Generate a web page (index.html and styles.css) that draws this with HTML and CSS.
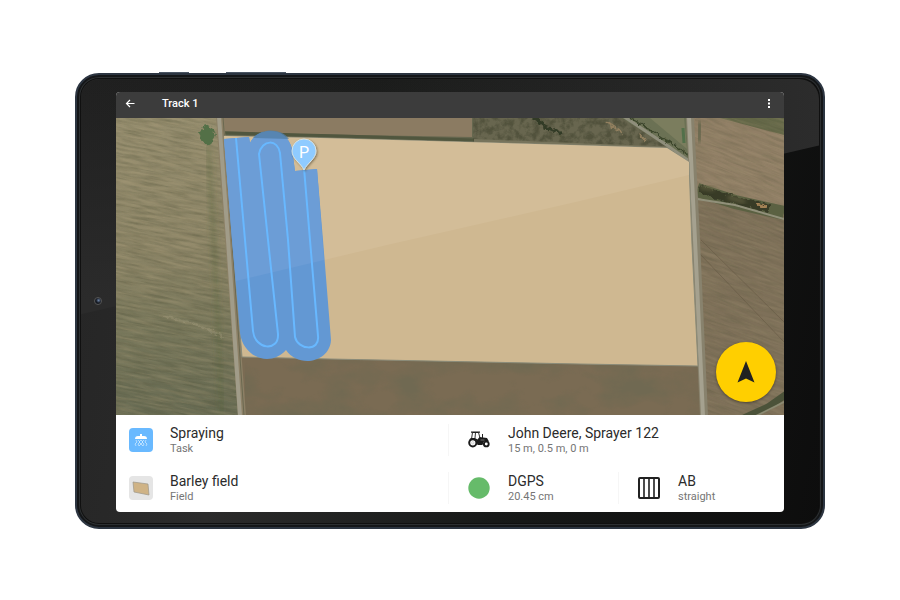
FILE: index.html
```html
<!DOCTYPE html>
<html lang="en">
<head>
<meta charset="utf-8">
<meta name="viewport" content="width=device-width, initial-scale=1">
<title>Track 1</title>
<link rel="stylesheet" href="styles.css">
</head>
<body>
<main class="tablet">
  <span class="side-key side-key-power"></span>
  <span class="side-key side-key-volume"></span>
  <span class="camera"></span>
  <div class="screen">
    <header class="app-bar">
      <button class="icon-button" type="button" aria-label="Back">
        <svg viewBox="0 0 12 12" width="12" height="12"><path d="M9.500 5.500H2M5 2L1.500 5.500L5 9" fill="none" stroke="#fff" stroke-width="1.200"/></svg>
      </button>
      <h1 class="app-title">Track 1</h1>
      <button class="icon-button" type="button" aria-label="More options">
        <svg viewBox="0 0 12 12" width="12" height="12" fill="#fff"><rect x="5" y="1" width="2" height="2"/><rect x="5" y="4.500" width="2" height="2"/><rect x="5" y="8" width="2" height="2"/></svg>
      </button>
    </header>

    <section class="map" aria-label="Field map">
      <svg class="map-canvas" viewBox="116 118 668 297" preserveAspectRatio="xMidYMid slice">
        <defs>
          <filter id="streaks" x="0" y="0" width="100%" height="100%" color-interpolation-filters="sRGB">
            <feTurbulence type="fractalNoise" baseFrequency="0.04 0.4" numOctaves="4" seed="7"/>
            <feColorMatrix values="0 0 0 0 0.34  0 0 0 0 0.34  0 0 0 0 0.24  1.8 0 0 0 -0.7"/>
          </filter>
          <filter id="glints" x="0" y="0" width="100%" height="100%" color-interpolation-filters="sRGB">
            <feTurbulence type="fractalNoise" baseFrequency="0.03 0.34" numOctaves="4" seed="21"/>
            <feColorMatrix values="0 0 0 0 0.7  0 0 0 0 0.64  0 0 0 0 0.5  1.8 0 0 0 -0.66"/>
          </filter>
          <filter id="patches" x="0" y="0" width="100%" height="100%" color-interpolation-filters="sRGB">
            <feTurbulence type="fractalNoise" baseFrequency="0.02 0.035" numOctaves="5" seed="3"/>
            <feColorMatrix values="0 0 0 0 0.42  0 0 0 0 0.41  0 0 0 0 0.32  3 0 0 0 -1.2"/>
          </filter>
          <filter id="scrub" x="0" y="0" width="100%" height="100%" color-interpolation-filters="sRGB">
            <feTurbulence type="fractalNoise" baseFrequency="0.15" numOctaves="4" seed="5"/>
            <feColorMatrix values="0 0 0 0 0.25  0 0 0 0 0.26  0 0 0 0 0.18  3 0 0 0 -1.2"/>
          </filter>
          <filter id="rough" x="-10%" y="-30%" width="120%" height="160%">
            <feTurbulence type="fractalNoise" baseFrequency="0.22" numOctaves="3" seed="4"/>
            <feDisplacementMap in="SourceGraphic" scale="6" xChannelSelector="R" yChannelSelector="G"/>
            <feGaussianBlur stdDeviation=".5"/>
          </filter>
          <filter id="soft"><feGaussianBlur stdDeviation="2"/></filter>
          <filter id="pin-shadow" x="-30%" y="-30%" width="170%" height="170%"><feDropShadow dx="1" dy="1" stdDeviation="1" flood-color="#3d3422" flood-opacity=".55"/></filter>
          <linearGradient id="west" x1="0" y1="0" x2="0" y2="1">
            <stop offset="0" stop-color="#958d6e"/><stop offset=".45" stop-color="#8b8466"/>
            <stop offset=".7" stop-color="#76765a"/><stop offset="1" stop-color="#666a52"/>
          </linearGradient>
          <clipPath id="west-clip"><path d="M116 118H219L228 240L239 415H116Z"/></clipPath>
          <clipPath id="east-clip"><path d="M692 118H784V415H706L698 240Z"/></clipPath>
          <clipPath id="north-clip"><path d="M473 118H692V166L667 150L473 144Z"/></clipPath>
        </defs>

        <rect x="116" y="118" width="668" height="297" fill="#776b52"/>

        <path d="M116 118H219L228 240L239 415H116Z" fill="url(#west)"/>
        <g clip-path="url(#west-clip)">
          <path d="M208 145L214 245L222 415" fill="none" stroke="#536040" stroke-opacity=".35" stroke-width="6" filter="url(#soft)"/>
          <rect x="60" y="60" width="260" height="400" filter="url(#streaks)" opacity=".5" transform="rotate(11 170 260)"/>
          <rect x="60" y="60" width="260" height="400" filter="url(#glints)" opacity=".4" transform="rotate(11 170 260)"/>
          <path d="M205 124L213 129L216 135L210 145L204 143L199 133Z" fill="#526f47" filter="url(#rough)"/>
          <path d="M163 316L190 322L222 336" fill="none" stroke="#aaa182" stroke-opacity=".35" stroke-width="2" filter="url(#rough)"/>
        </g>

        <path d="M222 118H560V150L223 140Z" fill="#66674f"/>
        <path d="M222 118H472V137L300 134L222 131Z" fill="#8b7b62"/>
        <path d="M223 133L340 136L474 140" fill="none" stroke="#50563e" stroke-width="3"/>

        <path d="M474 118H692V166L667 150L474 144Z" fill="#68664f"/>
        <g clip-path="url(#north-clip)">
          <rect x="470" y="118" width="225" height="50" filter="url(#scrub)" opacity=".55"/>
          <path d="M474 141L600 146L680 149" fill="none" stroke="#77745c" stroke-width="4"/>
          <path d="M534 117L546 127L562 134" fill="none" stroke="#333b26" stroke-width="3" filter="url(#rough)"/>
          <path d="M607 122L622 133M640 135L646 141" fill="none" stroke="#93805f" stroke-width="2" filter="url(#rough)"/>
          <path d="M622 118H692V166L675 152Z" fill="#6b7154"/>
          <path d="M650 118H684L687 149Z" fill="#7b7d5e"/>
          <path d="M623 116L668 146L692 163" fill="none" stroke="#8f8e7b" stroke-width="3"/>
          <path d="M630 117L658 135L692 157" fill="none" stroke="#3b452b" stroke-width="2" filter="url(#rough)"/>
          <path d="M683 128L684 143" stroke="#52704a" stroke-width="3"/>
        </g>

        <path d="M692 118H784V260H698Z" fill="#917f66"/>
        <path d="M720 118H784V135Z" fill="#646848"/>
        <path d="M696 198L784 216V415H706Z" fill="#7e7059"/>
        <g clip-path="url(#east-clip)">
          <rect x="650" y="60" width="200" height="400" filter="url(#streaks)" opacity=".35" transform="rotate(22 740 250)"/>
          <rect x="650" y="60" width="200" height="400" filter="url(#glints)" opacity=".25" transform="rotate(17 740 250)"/>
          <path d="M697 190L735 202L784 213" fill="none" stroke="#5b6142" stroke-width="14"/>
          <path d="M699 189L730 199L770 209" fill="none" stroke="#373b27" stroke-width="8" filter="url(#rough)"/>
          <path d="M700 187L714 189M728 197L745 202" fill="none" stroke="#666444" stroke-width="3" filter="url(#soft)"/>
          <path d="M697 199L735 205L784 219" fill="none" stroke="#91907a" stroke-width="2"/>
          <path d="M757 204L766 207" stroke="#a38154" stroke-width="3" filter="url(#rough)"/>
          <path d="M700 122L699 142" stroke="#61634a" stroke-width="5" filter="url(#soft)"/>
          <path d="M700 254L784 342M701 240L784 322" fill="none" stroke="#655744" stroke-opacity=".55" stroke-width="1"/>
          <path d="M744 418L768 407L788 393" fill="none" stroke="#4b5239" stroke-width="7"/>
          <path d="M752 418L788 400" fill="none" stroke="#8b8a72" stroke-width="2"/>
        </g>

        <path d="M241 357L699 366L704 415H245Z" fill="#7a6b53"/>
        <rect x="245" y="359" width="457" height="56" filter="url(#patches)" opacity=".6"/>

        <path d="M220 117L229 240L242 416" fill="none" stroke="#8c8066" stroke-width="8"/>
        <path d="M219 117L228 240L240 416" fill="none" stroke="#a19c89" stroke-width="4"/>
        <path d="M223 117L232 240L244 416" fill="none" stroke="#6b6850" stroke-width="1"/>
        <path d="M690 117L696 240L704 416" fill="none" stroke="#88826d" stroke-width="8"/>
        <path d="M689 117L695 240L703 416" fill="none" stroke="#a5a18f" stroke-width="4"/>

        <path d="M224 136L320 138L570 145L667 148L689 162L692 245L698 366L580 364L330 359L242 357Z" fill="#cfb891" stroke="#8a8b79" stroke-width="1"/>
        <path d="M224 136L320 138L570 145L667 148L689 162V175L580 201L387 245L236 281Z" fill="#d3bd98"/>

        <path d="M224 139L249 137L250 143C257 127 287 126 292 149L295 171L317 169L323 240L331 340C330 362 299 369 286 350C270 368 243 357 240 333L232 240Z" fill="#6398d3"/>
        <path d="M224 139L249 137L250 143C257 127 287 126 292 149L295 171L317 169L324 260L236 281L232 240Z" fill="#6c9dd6"/>
        <path d="M253 138C262 128 281 128 289 139Z" fill="#527fa9" opacity=".8"/>
        <path d="M236 138L245 240L253 331C255 350 279 352 278 334L268 240L259 154C262 139 278 139 280 153L288 240L295 337C298 350 320 352 318 336L310 240L304 168" fill="none" stroke="#68b8ff" stroke-width="2" stroke-linejoin="round"/>

        <g filter="url(#pin-shadow)">
          <path d="M304 170C301 163 292 159 292 151A12 12 0 0 1 316 151C316 159 307 163 304 170Z" fill="#8fcbff" stroke="#d5e3e5" stroke-width="1"/>
        </g>
        <text x="304" y="158" text-anchor="middle" class="pin-label">P</text>
      </svg>
      <button class="locate" type="button" aria-label="Follow position">
        <svg viewBox="0 0 18 22" width="18" height="22"><path d="M9 0L17.500 21.500L9 17.500L.5 21.500Z" fill="#212121"/></svg>
      </button>
    </section>

    <section class="details" aria-label="Track details">
      <article class="item item-lead">
        <svg class="item-icon" viewBox="0 0 24 24">
          <rect x="0" y="0" width="24" height="24" rx="4" fill="#69b9ff"/>
          <path d="M11 6h2v2h-2zM6 11c0-2 1-3 3-3h6c2 0 3 1 3 3z" fill="#fff"/>
          <path d="M7 12l1 2-2 2 1 2M9 12l2 2-2 2 1 2M12 12l-2 2 2 2-2 2M12 12l2 2-2 2 2 2M15 12l-2 2 2 2-1 2M17 12l-1 2 2 2-1 2" fill="none" stroke="#d9eeff" stroke-width=".7"/>
        </svg>
        <div class="item-text"><h2>Spraying</h2><p>Task</p></div>
      </article>
      <article class="item item-wide">
        <svg class="item-icon" viewBox="0 0 24 24">
          <path d="M4.500 11L5.500 4.500H11.500L13 10M8.500 4.500L8 10" fill="none" stroke="#333" stroke-width="1"/>
          <path d="M4 3.500h9v1.300H4zM2 11.500l2-1.500h4l2.500 1.500 2-2.500 7.500 1 2 3.500-3.500-.5-2 1-1 3h-5L9 12z" fill="#1b1b1b"/>
          <path d="M15 10V6h1v4z" fill="#222"/>
          <path d="M13.500 12h4" stroke="#aaa" stroke-width=".6"/>
          <circle cx="5.800" cy="14.800" r="3.600" fill="#fff" stroke="#1b1b1b" stroke-width="2"/>
          <circle cx="5.800" cy="14.800" r="1.200" fill="none" stroke="#bbb" stroke-width=".6"/>
          <circle cx="19.300" cy="16" r="2.400" fill="#fff" stroke="#1b1b1b" stroke-width="1.900"/>
        </svg>
        <div class="item-text"><h2>John Deere, Sprayer 122</h2><p>15 m, 0.5 m, 0 m</p></div>
      </article>
      <article class="item item-lead">
        <svg class="item-icon" viewBox="0 0 24 24">
          <rect x="0" y="0" width="24" height="24" rx="4" fill="#e5e5e5"/>
          <path d="M4 6l15 2 1 11-15-3z" fill="#cfb386" stroke="#9c9689" stroke-width=".7"/>
        </svg>
        <div class="item-text"><h2>Barley field</h2><p>Field</p></div>
      </article>
      <article class="item">
        <svg class="item-icon" viewBox="0 0 24 24"><circle cx="12" cy="12" r="10.700" fill="#66bb6a"/></svg>
        <div class="item-text"><h2>DGPS</h2><p>20.45 cm</p></div>
      </article>
      <article class="item">
        <svg class="item-icon" viewBox="0 0 24 24"><rect x="2" y="2" width="20" height="20" rx="1" fill="none" stroke="#212121" stroke-width="2"/><path d="M7 2v20M12 2v20M17 2v20" stroke="#212121" stroke-width="1.600"/></svg>
        <div class="item-text"><h2>AB</h2><p>straight</p></div>
      </article>
    </section>
  </div>
</main>
</body>
</html>
```

FILE: styles.css
```css
* { box-sizing: border-box; }

body {
  margin: 0;
  min-height: 100vh;
  padding: 2px 75px 0;
  display: grid;
  align-items: center;
  background: #fff;
  font-family: Roboto, "Liberation Sans", sans-serif;
  color: #2b2b2b;
}

button {
  display: grid;
  place-items: center;
  padding: 0;
  border: 0;
  background: none;
  cursor: pointer;
}

/* Tablet body */
.tablet {
  position: relative;
  padding: 17px 39px 15px;
  border: 2px solid #2c3541;
  border-radius: 24px;
  background: linear-gradient(100deg, #252525, #2b2b2b 25%, #171918 60%, #0d0d0d);
  box-shadow: inset 0 0 0 2px #141618, inset 0 0 0 3px #2c2f31, inset 0 0 0 4px #101010;
}

/* Glass reflection across the upper part of the bezel */
.tablet::before {
  content: "";
  position: absolute;
  inset: 4px;
  border-radius: 20px;
  background: linear-gradient(180deg, rgba(32, 32, 32, 0), #2b2b2b 50%), linear-gradient(90deg, #202020, #1b1c1b 40%, #2c2c2c);
  clip-path: polygon(0 0, 100% 0, 100% 15%, 0 53%);
}

.side-key {
  position: absolute;
  top: -3px;
  height: 1px;
  background: #4a5563;
}

.side-key-power { left: 11%; width: 4%; }
.side-key-volume { left: 20%; width: 8%; }

.camera {
  position: absolute;
  left: 17px;
  top: 50%;
  width: 8px;
  height: 8px;
  margin-top: -4px;
  border: 1px solid #555;
  border-radius: 50%;
  background: radial-gradient(circle at 60% 40%, #6f86a8, #141820 50%);
}

.screen {
  position: relative;
  overflow: hidden;
  border-radius: 4px;
  background: #fff;
}

.app-bar {
  display: flex;
  align-items: center;
  padding: 0 9px 2px;
  background: #3c3c3c;
}

.icon-button { width: 12px; height: 24px; }
.icon-button:last-child { margin-left: auto; }

.app-title {
  margin: 0 0 0 25px;
  font-size: 11px;
  font-weight: 500;
  line-height: 24px;
  color: #fff;
}

.map {
  position: relative;
  aspect-ratio: 668 / 297;
}

.map-canvas {
  display: block;
  width: 100%;
  height: 100%;
}

.pin-label {
  font-size: 16px;
  fill: #fff;
}

.locate {
  position: absolute;
  right: 8px;
  bottom: 13px;
  width: 60px;
  height: 60px;
  border-radius: 50%;
  background: #ffcf00;
  box-shadow: 0 1px 3px rgba(0, 0, 0, 0.4);
}

/* Bottom sheet */
.details {
  display: grid;
  grid-template-columns: 332fr 170fr 166fr;
  padding-top: 1px;
}

.item {
  display: flex;
  align-items: center;
  gap: 17px;
  margin: 8px 0;
  padding-left: 18px;
  border-left: 1px solid #f6f6f6;
}

.item-lead {
  padding-left: 13px;
  border-left: 0;
}

.item-wide { grid-column: span 2; }

.item-icon {
  flex: none;
  width: 24px;
  height: 24px;
}

.item h2,
.item p {
  margin: 0;
  font-weight: 400;
}

.item h2 {
  font-size: 14px;
  line-height: 18px;
}

.item p {
  font-size: 11px;
  line-height: 14px;
  color: #757575;
}
```
